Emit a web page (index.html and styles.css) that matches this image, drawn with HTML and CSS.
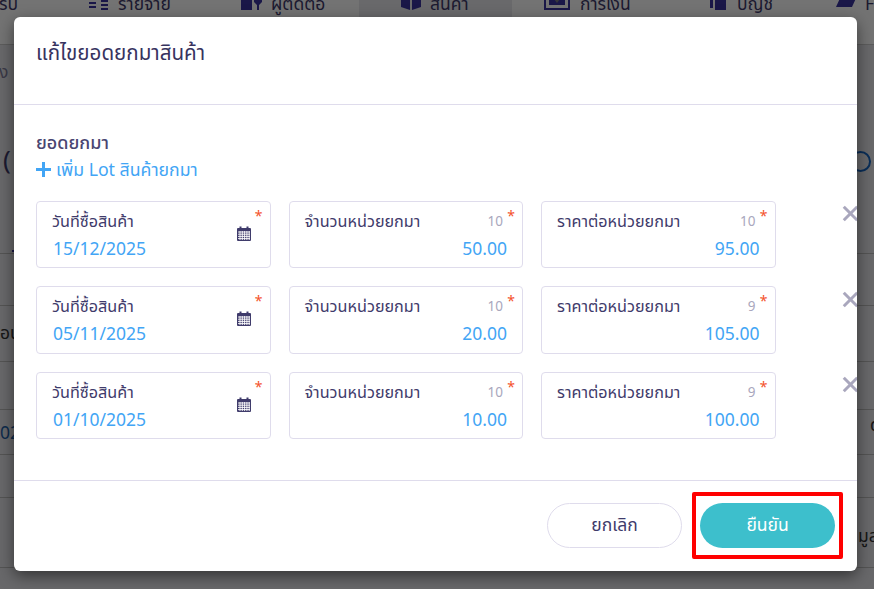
FILE: index.html
```html
<!DOCTYPE html>
<html lang="th">
<head>
<meta charset="utf-8">
<title>แก้ไขยอดยกมาสินค้า</title>
<link rel="stylesheet" href="styles.css">
</head>
<body>
<div class="page">
  <nav class="nav">
    <span class="nav-item nav-first">รับ</span>
    <span class="nav-item nav-pay"><svg class="nav-icon" viewBox="0 0 22 14"><path fill="#3a34a0" d="M1 6h7v2H1zM1 10h7v2H1zM13 0h7v2h-7zM13 4h7v2h-7zM13 8h7v2h-7zM13 12h7v2h-7z"/></svg>รายจ่าย</span>
    <span class="nav-item nav-contact"><svg class="nav-icon" viewBox="0 0 22 14"><path fill="#3a34a0" d="M0 0h11v14H0zM13 0h8v6l-3 3v5h-2V9l-3-3z"/></svg>ผู้ติดต่อ</span>
    <span class="nav-item nav-active"><svg class="nav-icon nav-icon-box" viewBox="0 0 20 14"><path fill="#3a34a0" d="M0 0l9 3v11L0 11zM20 0l-9 3v11l9-3z"/></svg>สินค้า</span>
    <span class="nav-item nav-money"><svg class="nav-icon nav-icon-money" viewBox="0 0 26 14"><path fill="none" stroke="#3a34a0" stroke-width="2" d="M1 0v13h24V0"/><path fill="#3a34a0" d="M5 0h16v9H5z"/><path fill="#7a7a86" d="M10 3h6l-3 4z"/></svg>การเงิน</span>
    <span class="nav-item nav-acc"><svg class="nav-icon nav-icon-book" viewBox="0 0 16 14"><path fill="#3a34a0" d="M0 0h3v12H0zM5 0h11v14H5z"/></svg>บัญชี</span>
    <span class="nav-item nav-file"><svg class="nav-icon nav-icon-folder" viewBox="0 0 21 14"><path fill="#3a34a0" d="M5 0h16l-5 11H0z"/></svg>F</span>
  </nav>
  <main class="content">
    <div class="bg-top"><span class="bg-hint">ง</span></div>
    <div class="bg-title"><span class="bg-paren">(</span><span class="bg-ring"></span></div>
    <div class="bg-row bg-h52"></div>
    <div class="bg-row bg-h56"><span>อน</span></div>
    <div class="bg-row bg-h46"></div>
    <div class="bg-row bg-h47 bg-date"><span>02/</span><span class="bg-end">ด</span></div>
    <div class="bg-row bg-h43"></div>
    <div class="bg-row bg-h70"><span></span><span class="bg-end-wide">มูล</span></div>
  </main>
</div>
<div class="overlay"></div>
<section class="modal">
  <header class="modal-head"><h1 class="modal-title">แก้ไขยอดยกมาสินค้า</h1></header>
  <div class="modal-body">
    <div class="section-label">ยอดยกมา</div>
    <a class="add-lot"><span class="plus"></span>เพิ่ม Lot สินค้ายกมา</a>
    <div class="rows">
      <div class="row">
        <div class="field"><span class="star">*</span><div class="label">วันที่ซื้อสินค้า</div><div class="value date">15/12/2025</div>
          <svg class="cal" viewBox="0 0 14 15"><path fill="#3f3b6b" d="M0 3a1 1 0 0 1 1-1h1.5V.5h2V2h5V.5h2V2H13a1 1 0 0 1 1 1v11a1 1 0 0 1-1 1H1a1 1 0 0 1-1-1z"/><path stroke="#fff" stroke-width=".9" d="M1 6h12M1 8.2h12M1 10.4h12M1 12.6h12M3 5v9M5.3 5v9M7.6 5v9M9.9 5v9M12.2 5v9"/></svg></div>
        <div class="field"><span class="star">*</span><span class="count">10</span><div class="label">จำนวนหน่วยยกมา</div><div class="value">50.00</div></div>
        <div class="field"><span class="star">*</span><span class="count">10</span><div class="label">ราคาต่อหน่วยยกมา</div><div class="value">95.00</div></div>
        <span class="remove"></span>
      </div>
      <div class="row">
        <div class="field"><span class="star">*</span><div class="label">วันที่ซื้อสินค้า</div><div class="value date">05/11/2025</div>
          <svg class="cal" viewBox="0 0 14 15"><path fill="#3f3b6b" d="M0 3a1 1 0 0 1 1-1h1.5V.5h2V2h5V.5h2V2H13a1 1 0 0 1 1 1v11a1 1 0 0 1-1 1H1a1 1 0 0 1-1-1z"/><path stroke="#fff" stroke-width=".9" d="M1 6h12M1 8.2h12M1 10.4h12M1 12.6h12M3 5v9M5.3 5v9M7.6 5v9M9.9 5v9M12.2 5v9"/></svg></div>
        <div class="field"><span class="star">*</span><span class="count">10</span><div class="label">จำนวนหน่วยยกมา</div><div class="value">20.00</div></div>
        <div class="field"><span class="star">*</span><span class="count">9</span><div class="label">ราคาต่อหน่วยยกมา</div><div class="value">105.00</div></div>
        <span class="remove"></span>
      </div>
      <div class="row">
        <div class="field"><span class="star">*</span><div class="label">วันที่ซื้อสินค้า</div><div class="value date">01/10/2025</div>
          <svg class="cal" viewBox="0 0 14 15"><path fill="#3f3b6b" d="M0 3a1 1 0 0 1 1-1h1.5V.5h2V2h5V.5h2V2H13a1 1 0 0 1 1 1v11a1 1 0 0 1-1 1H1a1 1 0 0 1-1-1z"/><path stroke="#fff" stroke-width=".9" d="M1 6h12M1 8.2h12M1 10.4h12M1 12.6h12M3 5v9M5.3 5v9M7.6 5v9M9.9 5v9M12.2 5v9"/></svg></div>
        <div class="field"><span class="star">*</span><span class="count">10</span><div class="label">จำนวนหน่วยยกมา</div><div class="value">10.00</div></div>
        <div class="field"><span class="star">*</span><span class="count">9</span><div class="label">ราคาต่อหน่วยยกมา</div><div class="value">100.00</div></div>
        <span class="remove"></span>
      </div>
    </div>
  </div>
  <footer class="modal-foot">
    <button class="btn btn-cancel">ยกเลิก</button>
    <button class="btn btn-ok">ยืนยัน</button>
  </footer>
</section>
<div class="highlight"></div>
</body>
</html>
```
FILE: styles.css
```css
* { box-sizing: border-box; }
html, body { margin: 0; height: 100%; overflow: hidden; }
body { background: #e6e6ea; font-family: "Noto Sans", "Noto Sans Thai", sans-serif; color: #3f3b6b; width: 874px; height: 589px; position: relative; }
.page { width: 874px; height: 589px; overflow: hidden; }
.nav { display: flex; height: 45px; background: #fff; border-bottom: 1px solid #ccc; font-size: 17.5px; overflow: hidden; color: #3f3b6b; }
.nav-item { display: flex; align-items: flex-start; height: 54px; margin-top: -9px; line-height: 24px; white-space: nowrap; }
.nav-first { width: 88px; margin-left: -1px; padding-left: 0; }
.nav-pay { width: 153px; margin-left: 1px; }
.nav-contact { width: 118px; }
.nav-active { width: 153px; padding-left: 42px; background: #e8e8ee; }
.nav-money { width: 166px; padding-left: 32px; }
.nav-acc { width: 158px; padding-left: 32px; }
.nav-file { flex: 1; }
.nav-icon { width: 22px; height: 14px; margin: 5px 8px 0 0; }
.nav-icon-box { width: 20px; margin-right: 9px; }
.nav-icon-money { width: 26px; margin-right: 10px; }
.nav-icon-book { width: 16px; margin-right: 11px; }
.nav-icon-folder { width: 21px; margin-right: 8px; }
.content { font-size: 17.5px; }
.bg-top { height: 64px; padding-top: 14px; line-height: 24px; }
.bg-hint { color: #3f3b6b; opacity: .6; margin-left: -1px; }
.bg-title { height: 145px; border-bottom: 1px solid #bbb; display: flex; justify-content: space-between; position: relative; }
.bg-title::after { content: ""; position: absolute; left: 12px; bottom: 1px; width: 3px; height: 2px; background: #3a34a0; }
.bg-paren { font-size: 26px; line-height: 36px; margin: 32px 0 0 3px; }
.bg-ring { width: 21px; height: 21px; margin: 42px 3px 0 0; border: 2px solid #1565c0; border-radius: 50%; }
.bg-row { display: flex; justify-content: space-between; align-items: center; border-bottom: 1px solid #bbb; white-space: nowrap; overflow: hidden; color: #333; }
.bg-h52 { height: 52px; }
.bg-h56 { height: 56px; }
.bg-h46 { height: 48px; }
.bg-h47 { height: 45px; }
.bg-h43 { height: 43px; }
.bg-h70 { height: 70px; }
.bg-date { color: #1c5fa8; }
.bg-end { width: 4px; overflow: hidden; margin-bottom: 14px; color: #333; }
.bg-end-wide { width: 16px; overflow: hidden; margin-top: 8px; }
.overlay { position: absolute; inset: 0; background: rgba(0,0,0,.55); }
.modal { position: absolute; left: 14px; top: 17px; width: 843px; height: 554px; background: #fff; border-radius: 6px; display: flex; flex-direction: column; overflow: hidden; box-shadow: 0 5px 15px rgba(0,0,0,.5); }
.modal-head { height: 88px; border-bottom: 1px solid #dfdcec; padding: 20px 22px 0; }
.modal-title { margin: 0; font-size: 20.6px; font-weight: 400; line-height: 30px; color: #37335f; }
.modal-body { flex: 1; padding: 25px 22px 0; }
.section-label { font-size: 18px; line-height: 24px; font-weight: 500; color: #4a4672; }
.add-lot { display: flex; align-items: center; gap: 5px; margin-top: 2px; font-size: 17.7px; line-height: 26px; color: #42a5f5; }
.plus { width: 15px; height: 15px; background: linear-gradient(#42a5f5,#42a5f5) center/15px 3px no-repeat, linear-gradient(#42a5f5,#42a5f5) center/3px 15px no-repeat; }
.rows { display: flex; flex-direction: column; gap: 18px; margin-top: 18.9px; }
.row { display: flex; gap: 18px; position: relative; }
.field { position: relative; width: 234.5px; height: 67.5px; border: 1px solid #dfdcec; border-radius: 4px; padding: 7px 15px 0; }
.label { font-size: 16.2px; line-height: 24px; }
.value { font-size: 17.5px; line-height: 26px; margin-top: 2px; text-align: right; color: #42a5f5; }
.value.date { text-align: left; padding-left: 1px; }
.star { position: absolute; right: 7px; top: 7px; color: #f4512c; font-size: 14px; line-height: 14px; }
.count { position: absolute; right: 19px; top: 10px; color: #a9a7bd; font-size: 13.5px; line-height: 18px; }
.cal { position: absolute; left: 200px; top: 24px; width: 14px; height: 15px; }
.remove { position: absolute; left: 806px; top: 5px; width: 16px; height: 16px; }
.remove::before, .remove::after { content: ""; position: absolute; left: -1px; top: 6.5px; width: 19px; height: 3px; background: #a9a7bd; }
.remove::before { transform: rotate(45deg); }
.remove::after { transform: rotate(-45deg); }
.modal-foot { height: 91px; border-top: 1px solid #dfdcec; display: flex; justify-content: flex-end; align-items: flex-start; gap: 18px; padding: 22px 22px 0; }
.btn { width: 135px; height: 45px; border-radius: 23px; font: inherit; font-size: 17.5px; }
.btn-cancel { background: #fff; border: 1px solid #dfdcec; color: #3f3b6b; }
.btn-ok { background: #3dbfcc; border: 0; color: #fff; }
.highlight { position: absolute; left: 692px; top: 492px; width: 151px; height: 67px; border: 4px solid #f00; border-radius: 2px; }
```
